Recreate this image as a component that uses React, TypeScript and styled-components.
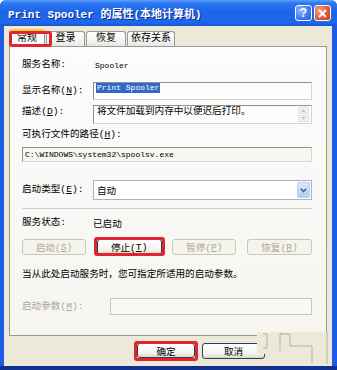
import React from "react";
import styled, { createGlobalStyle } from "styled-components";

const MONO = `"Liberation Mono", "Noto Sans CJK SC", monospace`;

const GlobalStyle = createGlobalStyle`
  html, body { margin: 0; padding: 0; background: #ffffff; }
  body { font-family: ${MONO}; }
  * { box-sizing: border-box; }
`;

const Window = styled.div`
  position: relative;
  width: 337px;
  height: 370px;
  display: flex;
  flex-direction: column;
  overflow: hidden;
  background: #1d5be4;
  border-radius: 6px 6px 0 0;
`;

const TitleBar = styled.div`
  height: 26px;
  flex: none;
  display: flex;
  align-items: center;
  justify-content: space-between;
  padding: 0 6px 0 8px;
  background: linear-gradient(180deg, #5aa0fb 0%, #2f78f1 12%, #1c64e9 45%, #1f68ed 85%, #1457d6 100%);
`;

const Title = styled.span`
  color: #ffffff;
  font: bold 11px ${MONO};
  text-shadow: 1px 1px 0 #0b2a8a;
  white-space: nowrap;
`;

const Caption = styled.div`
  display: flex;
  gap: 2px;
`;

const CapButton = styled.div<{ $close?: boolean }>`
  width: 17px;
  height: 16px;
  border: 1px solid #ffffff;
  border-radius: 3px;
  display: flex;
  align-items: center;
  justify-content: center;
  background: ${(p) =>
    p.$close
      ? "radial-gradient(circle at 30% 30%, #f5a488, #e15630 60%, #c63c18)"
      : "radial-gradient(circle at 30% 30%, #93b9ff, #3f78ec 60%, #2b5fd8)"};
  color: #ffffff;
  font: bold 12px "Liberation Sans", sans-serif;
`;

const Frame = styled.div`
  flex: 1;
  display: flex;
  padding: 0 5px 4px 4px;
  background: linear-gradient(180deg, #1d5be4 0, #1d5be4 calc(100% - 4px), #12308f calc(100% - 4px));
`;

const Body = styled.div`
  position: relative;
  flex: 1;
  display: flex;
  flex-direction: column;
  padding: 3px 5px 0 5px;
  background: #ece9d8;
  color: #000000;
`;

const TabRow = styled.div`
  position: relative;
  z-index: 2;
  display: flex;
  align-items: flex-end;
  gap: 1px;
  height: 17px;
  flex: none;
`;

const Tab = styled.div<{ $w: number; $active?: boolean }>`
  position: relative;
  width: ${(p) => p.$w}px;
  height: ${(p) => (p.$active ? 18 : 15)}px;
  margin-bottom: ${(p) => (p.$active ? -1 : 0)}px;
  display: flex;
  align-items: center;
  justify-content: center;
  font-size: 10px;
  line-height: 12px;
  border: 1px solid #919b9c;
  border-bottom: none;
  border-top: ${(p) => (p.$active ? "2px solid #ffc83c" : "1px solid #919b9c")};
  border-radius: 3px 3px 0 0;
  background: ${(p) =>
    p.$active ? "#fcfcfe" : "linear-gradient(#ffffff, #f4f4f0 60%, #e7e6df)"};
`;

const Panel = styled.div`
  height: 290px;
  flex: none;
  display: flex;
  flex-direction: column;
  padding: 11px 14px 0 12px;
  border: 1px solid #919b9c;
  background: linear-gradient(#fcfcfe, #f6f5f0);
  font-size: 9.6px;
`;

const Row = styled.div<{ $h: number; $mt?: number; $top?: boolean }>`
  display: flex;
  align-items: ${(p) => (p.$top ? "flex-start" : "center")};
  height: ${(p) => p.$h}px;
  margin-top: ${(p) => p.$mt ?? 0}px;
  flex: none;
`;

const Label = styled.span<{ $w?: number; $disabled?: boolean; $pt?: number }>`
  width: ${(p) => (p.$w ? `${p.$w}px` : "auto")};
  flex: none;
  white-space: nowrap;
  line-height: 12px;
  padding-top: ${(p) => p.$pt ?? 0}px;
  color: ${(p) => (p.$disabled ? "#aca899" : "#000000")};
`;

const MonoValue = styled.span`
  font-size: 8px;
  padding-left: 2px;
`;

const Field = styled.div<{ $align?: string; $bg?: string; $disabled?: boolean }>`
  flex: 1;
  height: 100%;
  display: flex;
  align-items: ${(p) => p.$align ?? "center"};
  padding: 0 2px;
  border: 1px solid;
  border-color: ${(p) =>
    p.$disabled ? "#c9c7ba" : "#8f908f #d6d6d0 #d6d6d0 #8f908f"};
  background: ${(p) => p.$bg ?? "#fdfdfb"};
  font-size: 8px;
  white-space: nowrap;
  overflow: hidden;
`;

const Selected = styled.span`
  background: #316ac5;
  color: #ffffff;
  line-height: 10px;
  padding: 0 1px;
`;

const DescText = styled.span`
  flex: 1;
  font-size: 9.6px;
  line-height: 12px;
  padding-left: 1px;
`;

const ScrollCol = styled.div`
  width: 11px;
  height: 100%;
  display: flex;
  flex-direction: column;
  gap: 1px;
  padding: 1px 0;
`;

const ScrollBtn = styled.div`
  height: 8px;
  border: 1px solid #e0e0da;
  border-radius: 1px;
  background: #f3f3ef;
  display: flex;
  align-items: center;
  justify-content: center;
`;

const Select = styled.div`
  flex: 1;
  height: 100%;
  display: flex;
  align-items: center;
  justify-content: space-between;
  padding: 0 1px 0 3px;
  border: 1px solid #a9b2bd;
  background: #ffffff;
  font-size: 9.6px;
`;

const DropBtn = styled.div`
  width: 13px;
  height: 16px;
  border: 1px solid #b9cdf5;
  border-radius: 2px;
  background: linear-gradient(#dbe6fd, #b7cbf6);
  display: flex;
  align-items: center;
  justify-content: center;
`;

const Separator = styled.div`
  height: 1px;
  margin-top: 8px;
  background: #d2d0c4;
  flex: none;
`;

const ButtonRow = styled.div`
  display: flex;
  justify-content: space-between;
  height: 16px;
  margin-top: 9px;
  flex: none;
`;

const Btn = styled.div<{ $w: number; $h?: number; $disabled?: boolean }>`
  position: relative;
  width: ${(p) => p.$w}px;
  height: ${(p) => p.$h ?? 16}px;
  display: flex;
  align-items: center;
  justify-content: center;
  border: 1px solid ${(p) => (p.$disabled ? "#c9c7ba" : "#2b3f58")};
  border-radius: 3px;
  background: ${(p) =>
    p.$disabled ? "#f5f4ea" : "linear-gradient(#ffffff, #f3f3ee 70%, #dcd7cc)"};
  color: ${(p) => (p.$disabled ? "#aca899" : "#000000")};
  font-size: 9.6px;
  white-space: nowrap;
`;

const RedBox = styled.div<{ $t: number; $r: number; $b: number; $l: number }>`
  position: absolute;
  top: ${(p) => -p.$t}px;
  right: ${(p) => -p.$r}px;
  bottom: ${(p) => -p.$b}px;
  left: ${(p) => -p.$l}px;
  border: 3px solid #e0262d;
  border-radius: 3px;
  pointer-events: none;
  z-index: 3;
`;

const Footer = styled.div`
  flex: 1;
  display: flex;
  align-items: flex-start;
  gap: 7px;
  padding: 7px 0 0 128px;
`;

const Glitch = styled.svg`
  position: absolute;
  left: 249px;
  top: 306px;
  pointer-events: none;
`;

const Chevron = () => (
  <svg width="7" height="5" viewBox="0 0 7 5">
    <path d="M0.8 0.8 L3.5 3.6 L6.2 0.8" fill="none" stroke="#4d6185" strokeWidth="1.6" />
  </svg>
);

const Arrow = ({ up }: { up?: boolean }) => (
  <svg width="5" height="3" viewBox="0 0 5 3">
    <path d={up ? "M0 3 L2.5 0 L5 3 Z" : "M0 0 L2.5 3 L5 0 Z"} fill="#c8c8c0" />
  </svg>
);

export default function App() {
  return (
    <>
      <GlobalStyle />
      <Window>
        <TitleBar>
          <Title>Print Spooler 的属性(本地计算机)</Title>
          <Caption>
            <CapButton>?</CapButton>
            <CapButton $close>
              <svg width="9" height="9" viewBox="0 0 9 9">
                <path d="M1 1 L8 8 M8 1 L1 8" stroke="#ffffff" strokeWidth="1.8" />
              </svg>
            </CapButton>
          </Caption>
        </TitleBar>
        <Frame>
          <Body>
            <TabRow>
              <Tab $w={36} $active>
                常规
                <RedBox $t={0} $r={8} $b={0} $l={1} />
              </Tab>
              <Tab $w={39}>登录</Tab>
              <Tab $w={40}>恢复</Tab>
              <Tab $w={48}>依存关系</Tab>
            </TabRow>
            <Panel>
              <Row $h={14}>
                <Label $w={71}>服务名称:</Label>
                <MonoValue>Spooler</MonoValue>
              </Row>
              <Row $h={18} $mt={10}>
                <Label $w={71}>
                  显示名称(<u>N</u>):
                </Label>
                <Field $align="flex-start">
                  <Selected>Print Spooler</Selected>
                </Field>
              </Row>
              <Row $h={19} $mt={5} $top>
                <Label $w={71} $pt={1}>
                  描述(<u>D</u>):
                </Label>
                <Field $align="flex-start">
                  <DescText>将文件加载到内存中以便迟后打印。</DescText>
                  <ScrollCol>
                    <ScrollBtn>
                      <Arrow up />
                    </ScrollBtn>
                    <ScrollBtn>
                      <Arrow />
                    </ScrollBtn>
                  </ScrollCol>
                </Field>
              </Row>
              <Row $h={14} $mt={4}>
                <Label>
                  可执行文件的路径(<u>H</u>):
                </Label>
              </Row>
              <Row $h={15} $mt={5}>
                <Field $bg="#f7f6f1">{"C:\\WINDOWS\\system32\\spoolsv.exe"}</Field>
              </Row>
              <Row $h={20} $mt={18}>
                <Label $w={71}>
                  启动类型(<u>E</u>):
                </Label>
                <Select>
                  <span>自动</span>
                  <DropBtn>
                    <Chevron />
                  </DropBtn>
                </Select>
              </Row>
              <Separator />
              <Row $h={14} $mt={7}>
                <Label $w={71}>服务状态:</Label>
                <span>已启动</span>
              </Row>
              <ButtonRow>
                <Btn $w={64} $disabled>
                  启动(<u>S</u>)
                </Btn>
                <Btn $w={65}>
                  停止(<u>T</u>)
                  <RedBox $t={3} $r={4} $b={2} $l={4} />
                </Btn>
                <Btn $w={64} $disabled>
                  暂停(<u>P</u>)
                </Btn>
                <Btn $w={65} $disabled>
                  恢复(<u>R</u>)
                </Btn>
              </ButtonRow>
              <Row $h={14} $mt={13}>
                <Label>当从此处启动服务时，您可指定所适用的启动参数。</Label>
              </Row>
              <Row $h={17} $mt={16}>
                <Label $w={88} $disabled>
                  启动参数(<u>M</u>):
                </Label>
                <Field $bg="#f9f8f4" $disabled>{""}</Field>
              </Row>
            </Panel>
            <Footer>
              <Btn $w={58} $h={15}>
                确定
                <RedBox $t={3} $r={4} $b={4} $l={4} />
              </Btn>
              <Btn $w={63} $h={16}>
                取消
              </Btn>
            </Footer>
            <Glitch width="80" height="36" viewBox="0 0 80 36">
              <rect x="4" y="0" width="74" height="22" fill="#ece9d8" />
              <path
                d="M10 2 H14 V16 H10 M29 2 H27 V19 M27 2 H37 V14 H59 V32 M74 0 V32"
                fill="none"
                stroke="#b5b3aa"
                strokeWidth="1"
              />
            </Glitch>
          </Body>
        </Frame>
      </Window>
    </>
  );
}
